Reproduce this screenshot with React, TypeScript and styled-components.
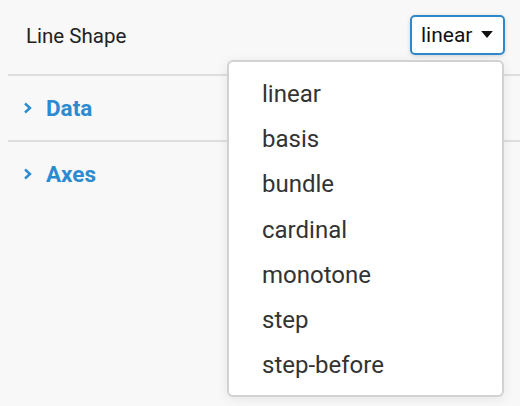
import React from 'react';
import styled, { createGlobalStyle } from 'styled-components';

const options = ['linear', 'basis', 'bundle', 'cardinal', 'monotone', 'step', 'step-before'];
const sections = ['Data', 'Axes'];

const App = () => {
  return (
    <>
      <GlobalStyle />
      <Panel>
        <SettingRow>
          <Label>Line Shape</Label>
          <SelectWrap>
            <SelectButton>
              linear
              <Caret viewBox="0 0 10 6">
                <path d="M0 0 L10 0 L5 6 Z" fill="#111" />
              </Caret>
            </SelectButton>
            <Menu>
              {options.map((o) => (
                <MenuItem key={o}>{o}</MenuItem>
              ))}
            </Menu>
          </SelectWrap>
        </SettingRow>
        {sections.map((s) => (
          <Section key={s}>
            <Chevron viewBox="0 0 9 12">
              <path d="M2 1.5 L7 6 L2 10.5" fill="none" stroke="#2b8bd0" strokeWidth="2.4" />
            </Chevron>
            <SectionTitle>{s}</SectionTitle>
          </Section>
        ))}
      </Panel>
    </>
  );
};

const GlobalStyle = createGlobalStyle`
  html, body {
    margin: 0;
    padding: 0;
    background: #f8f8f8;
    font-family: Roboto, "Liberation Sans", sans-serif;
  }
`;

const Panel = styled.div`
  width: 520px;
  height: 406px;
  padding-left: 8px;
  box-sizing: border-box;
  overflow: hidden;
`;

const SettingRow = styled.div`
  display: flex;
  align-items: center;
  justify-content: space-between;
  height: 74px;
  padding: 0 15px 0 18px;
  border-bottom: 2px solid #dedede;
`;

const Label = styled.span`
  font-size: 20.5px;
  color: #222;
  margin-top: -2px;
`;

const SelectWrap = styled.div`
  position: relative;
  margin-top: -5px;
`;

const SelectButton = styled.div`
  display: flex;
  align-items: center;
  gap: 8px;
  box-sizing: border-box;
  width: 95px;
  height: 40px;
  padding: 0 9px;
  border: 2px solid #2f88c9;
  border-radius: 5px;
  background: #fff;
  box-shadow: 0 1px 4px rgba(0, 0, 0, 0.15);
  font-size: 21px;
  color: #111;
`;

const Caret = styled.svg`
  width: 12px;
  height: 7px;
`;

const Menu = styled.div`
  position: absolute;
  top: 45px;
  right: 1px;
  width: 277px;
  box-sizing: border-box;
  padding: 10px 0 7px;
  background: #fff;
  border: 2px solid #d2d2d2;
  border-radius: 6px;
  box-shadow: 0 2px 12px rgba(0, 0, 0, 0.08);
  z-index: 10;
`;

const MenuItem = styled.div`
  height: 45.2px;
  display: flex;
  align-items: center;
  padding-left: 33px;
  font-size: 24px;
  color: #333;
`;

const Section = styled.div`
  display: flex;
  align-items: center;
  gap: 14px;
  height: 64px;
  padding-left: 15px;
  border-bottom: 2px solid #dedede;
  &:last-child {
    border-bottom: none;
  }
`;

const Chevron = styled.svg`
  width: 9px;
  height: 12px;
`;

const SectionTitle = styled.span`
  font-size: 22.5px;
  font-weight: 700;
  color: #2b8bd0;
`;

export default App;
